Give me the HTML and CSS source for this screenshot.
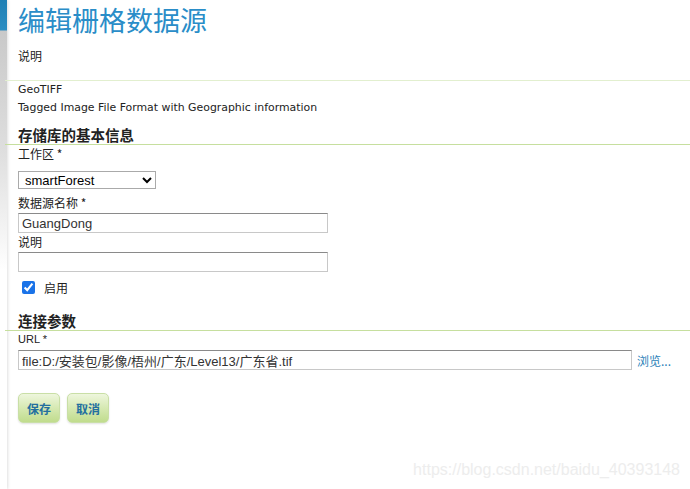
FILE: index.html
```html
<!DOCTYPE html>
<html lang="zh">
<head>
  <meta charset="UTF-8" />
  <title>编辑栅格数据源</title>
  <link rel="stylesheet" href="styles.css">
</head>
<body>
<div class="page">
  <div class="side"></div>
  <div class="main">
    <h1 class="title">编辑栅格数据源</h1>
    <p class="intro">说明</p>

    <div class="store-type">
      <div>GeoTIFF</div>
      <div>Tagged Image File Format with Geographic information</div>
    </div>

    <h3 class="section">存储库的基本信息</h3>
    <label class="field-label">工作区 *</label>
    <select class="ws-select">
      <option>smartForest</option>
    </select>
    <label class="field-label">数据源名称 *</label>
    <input class="text-input" type="text" value="GuangDong">
    <label class="field-label">说明</label>
    <input class="text-input" type="text" value="">
    <div class="check-row">
      <input type="checkbox" id="enabled" checked>
      <label for="enabled">启用</label>
    </div>

    <h3 class="section">连接参数</h3>
    <label class="field-label small">URL *</label>
    <div class="url-row">
      <input class="text-input url-input" type="text" value="file:D:/安装包/影像/梧州/广东/Level13/广东省.tif">
      <a class="browse" href="#">浏览...</a>
    </div>

    <div class="buttons">
      <button class="btn">保存</button>
      <button class="btn">取消</button>
    </div>

    <div class="watermark">https://blog.csdn.net/baidu_40393148</div>
  </div>
</div>
</body>
</html>
```

FILE: styles.css
```css
body {
  margin: 0;
  background: #fff;
  font-family: "Liberation Sans", "Noto Sans CJK SC", sans-serif;
  color: #222;
}
.page {
  display: flex;
  min-height: 489px;
}
.side {
  width: 7px;
  flex-shrink: 0;
  background: linear-gradient(to bottom, #1f7fb4 0, #2b8dc2 30px, #c9c9c9 31px, #dedede 150px, #f6f6f6 240px, #fff 270px);
  box-shadow: 1px 0 3px rgba(0,0,0,0.12);
}
.main {
  flex: 1;
  padding-left: 11px;
  position: relative;
}
.title {
  margin: 0;
  padding-top: 3px;
  font-family: "Noto Sans CJK SC", sans-serif;
  font-size: 27px;
  line-height: 34px;
  font-weight: normal;
  color: #2a8dc8;
}
.intro {
  margin: 11px 0 0;
  font-family: "Noto Sans CJK SC", sans-serif;
  font-size: 12px;
  line-height: 16px;
  height: 32px;
}
.store-type {
  margin-left: -13px;
  padding-left: 13px;
  border-top: 1px solid #e2efcf;
  font-family: "DejaVu Sans", sans-serif;
  font-size: 10.9px;
  line-height: 18px;
  padding-top: 0;
}
.section {
  margin: 9px 0 0 -13px;
  padding-left: 13px;
  font-family: "Noto Sans CJK SC", sans-serif;
  font-size: 14.5px;
  line-height: 18px;
  font-weight: bold;
  color: #222;
  border-bottom: 1px solid #c6df9e;
}
.field-label {
  display: block;
  font-family: "Noto Sans CJK SC", sans-serif;
  font-size: 12px;
  line-height: 16px;
  margin-top: 1px;
}
.field-label.small {
  font-family: "Liberation Sans", sans-serif;
  font-size: 11px;
  margin-top: 0;
}
.ws-select {
  display: block;
  width: 138px;
  height: 18px;
  margin: 9px 0 6px;
  padding: 0 2px;
  font-family: "Liberation Sans", sans-serif;
  font-size: 13px;
  color: #000;
  border: 1px solid #aaa;
  border-radius: 0;
  background: #fff;
}
.text-input {
  display: block;
  box-sizing: border-box;
  width: 310px;
  height: 20px;
  margin: 2px 0 1px;
  padding: 0 3px;
  font-family: "Liberation Sans", "Noto Sans CJK SC", sans-serif;
  font-size: 13px;
  color: #333;
  border: 1px solid #c8c8c8;
  border-top-color: #8a8a8a;
}
.check-row {
  display: flex;
  align-items: center;
  gap: 9px;
  margin: 7px 0 0 4px;
  font-family: "Noto Sans CJK SC", sans-serif;
  font-size: 12px;
  height: 16px;
}
.check-row input {
  margin: 0;
  width: 13px;
  height: 13px;
  accent-color: #1a73e8;
}
.check-row + .section {
  margin-top: 17px;
}
.url-row {
  display: flex;
  align-items: center;
  gap: 5px;
  margin-top: 3px;
}
.url-input {
  width: 614px;
  margin: 0;
}
.browse {
  font-family: "Noto Sans CJK SC", sans-serif;
  font-size: 12px;
  color: #2a7fb8;
  text-decoration: none;
}
.buttons {
  display: flex;
  gap: 7px;
  margin-top: 23px;
}
.btn {
  width: 42px;
  height: 30px;
  padding: 0;
  font-family: "Noto Sans CJK SC", sans-serif;
  font-size: 12px;
  font-weight: bold;
  color: #236f9f;
  background: linear-gradient(to bottom, #eef6dd 0%, #d6e9b2 50%, #c0dc8d 100%);
  border: 1px solid #c9dfa6;
  border-radius: 5px;
  box-shadow: 0 1px 2px rgba(0,0,0,0.12);
  cursor: pointer;
}
.watermark {
  position: absolute;
  right: 10px;
  top: 461px;
  font-family: "Liberation Sans", sans-serif;
  font-size: 16px;
  color: #ededed;
}
```
